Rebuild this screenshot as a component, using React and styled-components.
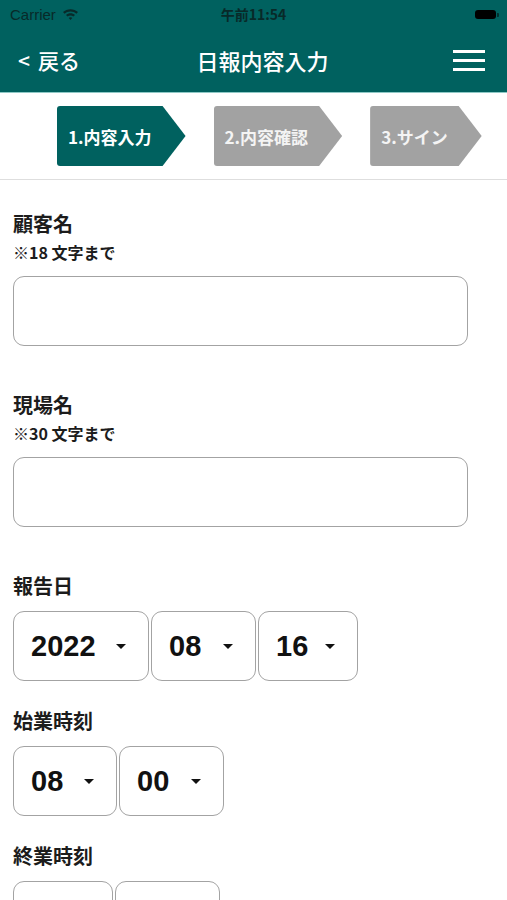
import styled, { createGlobalStyle } from "styled-components";

const GlobalStyle = createGlobalStyle`
  body {
    margin: 0;
    background: #ffffff;
    font-family: "Noto Sans CJK JP", "Noto Sans", sans-serif;
    color: #1e1e1e;
  }
`;

const TEAL = "#00615f";

const SHeader = styled.header`
  background: ${TEAL};
  border-bottom: 1px solid #8fc9c6;
`;

const SStatusBar = styled.div`
  height: 28px;
  display: flex;
  align-items: center;
  justify-content: space-between;
  padding: 0 10px;
  color: #082a29;
  font-size: 14px;
  position: relative;
`;

const SCarrier = styled.div`
  display: flex;
  align-items: center;
  gap: 6px;
  font-family: "Liberation Sans", "Noto Sans CJK JP", sans-serif;
  font-size: 15px;
`;

// 時刻は中央寄せ
const STime = styled.div`
  position: absolute;
  left: 0;
  right: 0;
  text-align: center;
  font-weight: bold;
  font-size: 14px;
  pointer-events: none;
`;

const SBattery = styled.div`
  width: 21px;
  height: 9px;
  background: #000;
  border-radius: 3px;
  margin-right: 1px;
  position: relative;
  &::after {
    content: "";
    position: absolute;
    right: -3px;
    top: 3px;
    width: 2px;
    height: 4px;
    background: rgba(0, 0, 0, 0.5);
    border-radius: 0 1px 1px 0;
  }
`;

const SNavBar = styled.div`
  height: 64px;
  display: flex;
  align-items: center;
  justify-content: space-between;
  padding: 0 22px 0 18px;
  color: #ffffff;
  position: relative;
`;

const SBack = styled.div`
  font-size: 21px;
  font-weight: 500;
  display: flex;
  align-items: center;
  gap: 8px;
`;

const STitle = styled.h1`
  position: absolute;
  left: 0;
  right: 0;
  margin: 0;
  text-align: center;
  font-size: 22px;
  font-weight: 500;
  padding-left: 18px;
  pointer-events: none;
`;

const SMenu = styled.div`
  width: 32px;
  display: flex;
  flex-direction: column;
  gap: 6px;
  span {
    display: block;
    height: 3px;
    background: #fff;
  }
`;

const SStepper = styled.nav`
  height: 86px;
  display: flex;
  align-items: center;
  gap: 28px;
  padding-left: 57px;
  border-bottom: 1px solid #dedede;
`;

const SStep = styled.div`
  height: 60px;
  display: flex;
  align-items: center;
  padding: 0 34px 0 11px;
  background: ${(p) => (p.$active ? TEAL : "#a2a2a2")};
  color: ${(p) => (p.$active ? "#ffffff" : "#f4f4f4")};
  font-size: 17px;
  font-weight: bold;
  border-radius: 3px 0 0 3px;
  clip-path: polygon(
    0 0,
    calc(100% - 23px) 0,
    100% 50%,
    calc(100% - 23px) 100%,
    0 100%
  );
`;

const SForm = styled.main`
  padding: 31px 13px 0;
`;

const SField = styled.section`
  margin-bottom: ${(p) => p.$gap}px;
`;

const SLabel = styled.div`
  font-size: 20px;
  font-weight: bold;
  line-height: 26px;
  color: #1c1c1c;
`;

const SNote = styled.div`
  font-size: 16px;
  font-weight: bold;
  line-height: 22px;
  margin-top: 4px;
  color: #1c1c1c;
`;

const STextInput = styled.input`
  display: block;
  box-sizing: border-box;
  width: 455px;
  height: 70px;
  margin-top: 13px;
  border: 1.5px solid #a3a3a3;
  border-radius: 11px;
  background: #fff;
  outline: none;
`;

const SSelectRow = styled.div`
  display: flex;
  gap: 2px;
  margin-top: 12px;
`;

const SSelect = styled.div`
  box-sizing: border-box;
  width: ${(p) => p.$width}px;
  height: 70px;
  border: 1.5px solid #a3a3a3;
  border-radius: 11px;
  display: flex;
  align-items: center;
  padding-left: 17px;
  font-family: "Liberation Sans", "Noto Sans", sans-serif;
  font-weight: bold;
  font-size: 29px;
  color: #111;
`;

const SCaret = styled.span`
  margin-left: auto;
  margin-right: 22px;
  width: 0;
  height: 0;
  border-left: 5px solid transparent;
  border-right: 5px solid transparent;
  border-top: 5px solid #111;
`;

const WifiIcon = () => (
  <svg width="17" height="13" viewBox="0 0 17 13">
    <path
      d="M8.5 1.2C5.6 1.2 3 2.3 1 4.1l1.6 1.7c1.6-1.4 3.6-2.3 5.9-2.3s4.3.9 5.9 2.3L16 4.1C14 2.3 11.4 1.2 8.5 1.2z"
      fill="#082a29"
    />
    <path
      d="M8.5 5.2c-1.7 0-3.3.7-4.5 1.7l1.6 1.7c.8-.7 1.8-1.1 2.9-1.1s2.1.4 2.9 1.1L13 6.9c-1.2-1-2.8-1.7-4.5-1.7z"
      fill="#082a29"
    />
    <path d="M8.5 9.2c-.7 0-1.3.3-1.8.7l1.8 2 1.8-2c-.5-.4-1.1-.7-1.8-.7z" fill="#082a29" />
  </svg>
);

const Select = ({ value, width }) => (
  <SSelect $width={width}>
    {value}
    <SCaret />
  </SSelect>
);

const TextField = ({ label, note }) => (
  <SField $gap={46}>
    <SLabel>{label}</SLabel>
    <SNote>{note}</SNote>
    <STextInput type="text" />
  </SField>
);

const SelectField = ({ label, items }) => (
  <SField $gap={27}>
    <SLabel>{label}</SLabel>
    <SSelectRow>
      {items.map((item, i) => (
        <Select key={i} value={item.value} width={item.width} />
      ))}
    </SSelectRow>
  </SField>
);

export default function App() {
  const steps = ["1.内容入力", "2.内容確認", "3.サイン"];
  return (
    <>
      <GlobalStyle />
      <SHeader>
        <SStatusBar>
          <SCarrier>
            Carrier
            <WifiIcon />
          </SCarrier>
          <STime>午前11:54</STime>
          <SBattery />
        </SStatusBar>
        <SNavBar>
          <SBack>
            <span>&lt;</span>
            <span>戻る</span>
          </SBack>
          <STitle>日報内容入力</STitle>
          <SMenu>
            <span />
            <span />
            <span />
          </SMenu>
        </SNavBar>
      </SHeader>
      <SStepper>
        {steps.map((s, i) => (
          <SStep key={s} $active={i === 0}>
            {s}
          </SStep>
        ))}
      </SStepper>
      <SForm>
        <TextField label="顧客名" note="※18 文字まで" />
        <TextField label="現場名" note="※30 文字まで" />
        <SelectField
          label="報告日"
          items={[
            { value: "2022", width: 136 },
            { value: "08", width: 105 },
            { value: "16", width: 100 },
          ]}
        />
        <SelectField
          label="始業時刻"
          items={[
            { value: "08", width: 104 },
            { value: "00", width: 105 },
          ]}
        />
        <SelectField
          label="終業時刻"
          items={[
            { value: "", width: 100 },
            { value: "", width: 105 },
          ]}
        />
      </SForm>
    </>
  );
}
